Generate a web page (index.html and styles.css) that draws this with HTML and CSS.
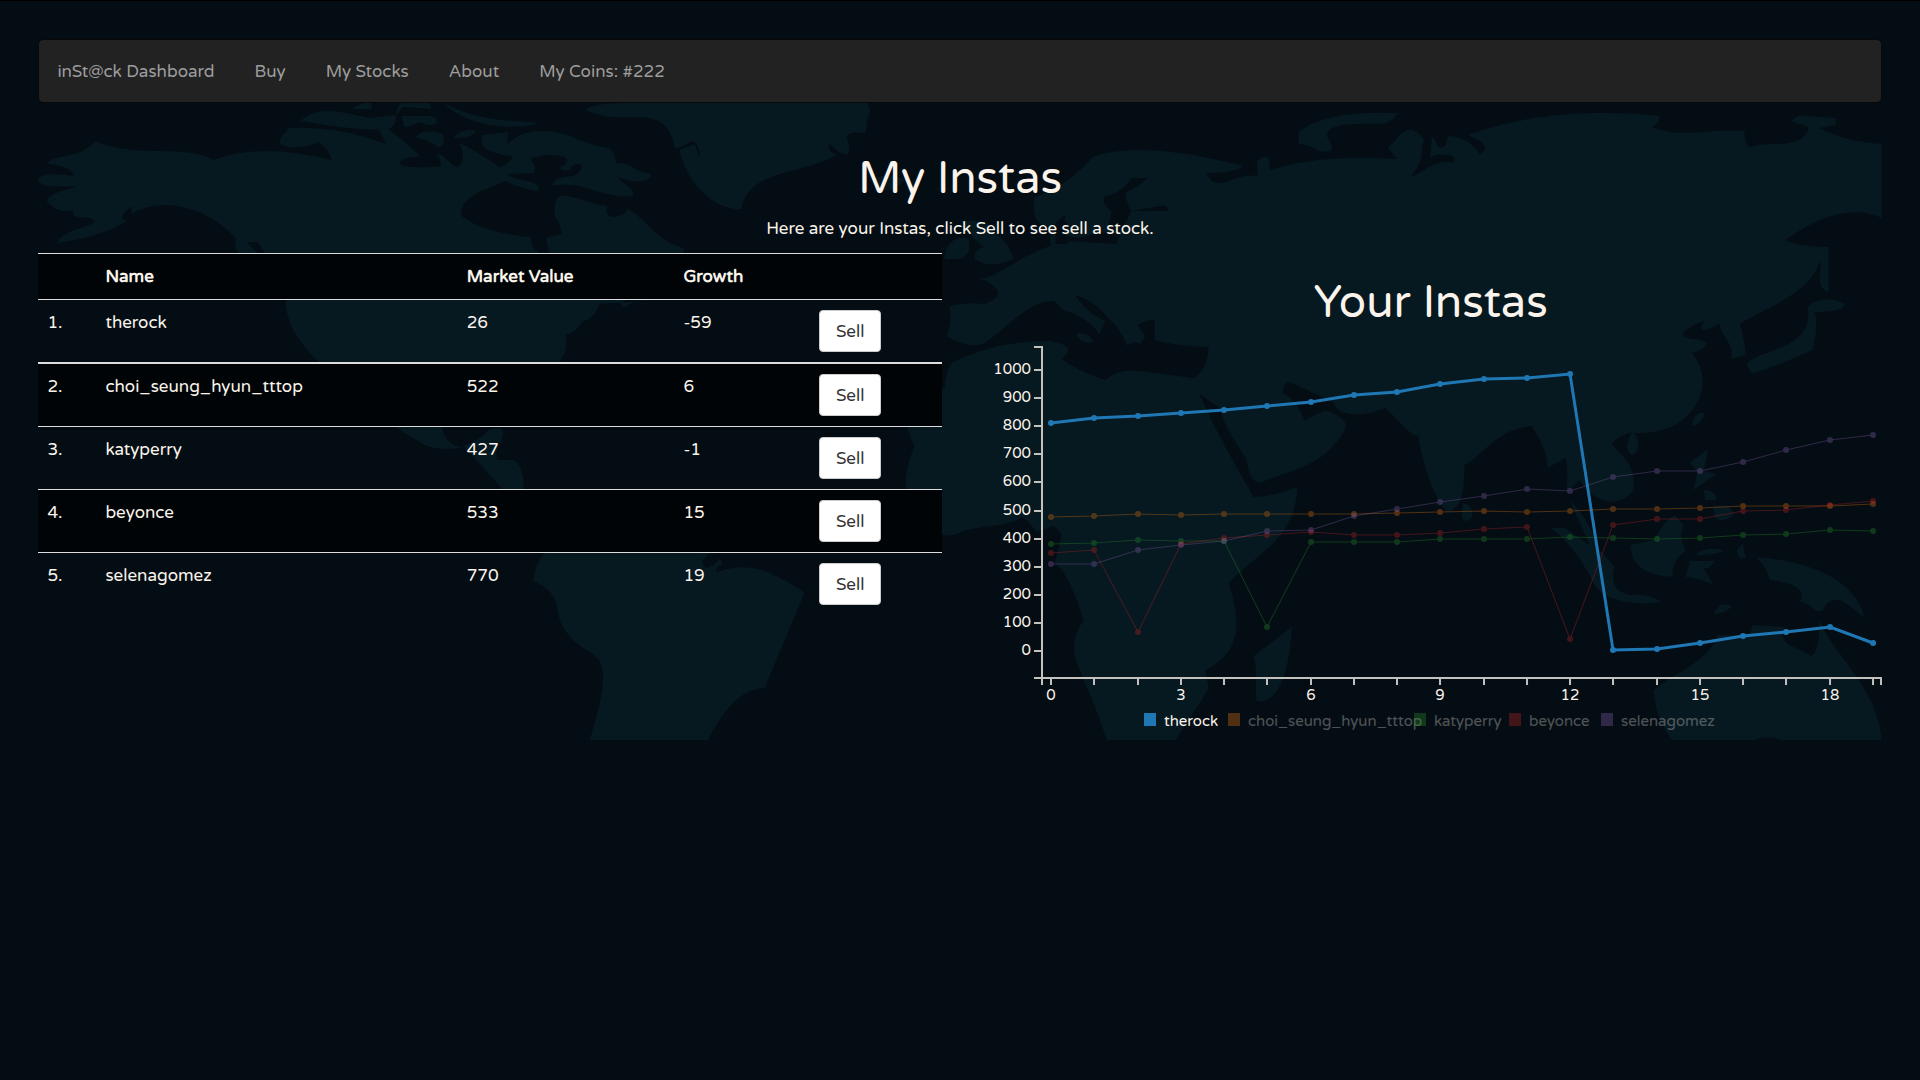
FILE: index.html
```html
<!DOCTYPE html>
<html lang="en">
<head>
<meta charset="utf-8">
<title>inSt@ck Dashboard</title>
<meta name="viewport" content="width=device-width, initial-scale=1">
<link rel="stylesheet" href="styles.css">
</head>
<body>
<div class="container">
  <svg class="map" viewBox="38 39 1844 701" preserveAspectRatio="xMidYMin slice" aria-hidden="true">
    <!-- North America -->
    <path d="M96 141Q115 151 160 151Q200 151 214 160Q260 142 332 160Q330 150 319 142C305 149 282 149 280 142Q281 135 287 132L288 128Q340 126 386 144Q384 138 379 130L390 130Q410 145 421 157C410 156 400 160 400 164C405 169 438 167 441 166Q442 158 436 155C446 152 449 166 457 167C463 165 466 158 460 143C475 150 490 160 500 167C506 166 510 160 514 157C505 155 482 152 482 142V135L508 132V144C520 130 545 127 570 136Q590 145 610 148Q615 153 617 163C632 162 636 173 652 174C650 182 635 185 619 177C621 183 634 187 634 195C625 200 600 192 590 189C575 184 565 184 553 186C555 170 580 184 582 166Q576 160 570 170Q562 172 560 168Q573 160 564 157Q548 152 531 159Q538 168 534 173L508 174C515 182 540 178 540 191Q525 190 505 181C490 190 463 192 461 215C475 227 500 234 531 237Q530 245 540 254H550L546 238L562 234Q560 222 556 218C553 205 556 200 560 196C575 194 590 205 608 206C602 220 620 220 629 209C650 222 655 240 684 248V262L664 281L622 303Q618 302 600 304Q596 318 582 322Q577 333 566 335Q568 350 563 357Q556 370 540 379Q535 410 520 400L470 405Q450 400 444 415Q438 440 460 447Q470 445 485 435Q487 428 500 428Q506 430 502 440Q494 452 498 460H515Q527 470 523 497H510L465 447Q440 452 425 445Q400 430 393 425L320 363Q285 330 286 299L265 254Q262 247 258 242L247 242L259 254H240Q234 250 236 238Q205 205 162 205Q142 207 132 214V206Q124 212 122 218L127 221C110 233 80 240 57 243C66 228 92 228 95 221C90 214 72 222 73 210C62 215 50 205 47 201C50 192 70 190 76 186Q60 187 47 186Q38 184 38 180C42 172 60 174 75 176Q70 165 47 164C55 153 80 160 96 141Z"/>
    <path d="M301 121C320 104 340 112 370 118L396 115Q398 125 388 130Q350 130 301 121ZM352 109L363 103H372V109ZM396 115Q398 105 402 103H430L432 109L404 107ZM402 116H432Q440 119 436 124Q428 127 420 122L405 128ZM416 138C418 130 438 130 444 135V144Q441 148 438 147Q425 138 416 138ZM454 138C460 128 475 129 476 131Q474 138 454 138ZM444 103C480 122 510 120 540 123C510 132 465 125 444 103ZM585 109Q600 103 620 103H868Q873 112 868 118L866 133C858 132 846 132 847 138Q852 146 848 154Q840 155 830 144Q826 150 838 155C800 175 748 170 742 209C715 212 685 180 680 150L695 144L700 157L700 155Q698 141 692 141Q682 148 675 148C672 130 665 118 640 117C610 119 595 115 585 109ZM621 303L650 300Q638 298 624 308Z"/>
    <path d="M526 364L550 366Q565 374 568 386Q550 374 526 364ZM580 380Q600 372 611 382Q598 396 580 380Z"/>
    <!-- South America -->
    <path d="M545 553H710L702 562L706 568Q716 566 720 558L723 564Q715 568 717 572Q745 562 770 573Q790 582 805 593L765 688C735 690 720 720 708 740H590Q606 690 603 670Q601 658 590 652Q560 636 557 605Q554 590 534 581Q535 564 545 553Z"/>
    <!-- Europe and Africa -->
    <path d="M1051 246V227C1030 225 1035 205 1034 198C1060 187 1072 180 1093 157C1130 143 1190 152 1244 166C1230 175 1216 171 1207 174Q1212 184 1220 183C1230 183 1240 173 1258 176Q1258 165 1257 161Q1267 153 1270 160V170C1310 158 1350 156 1396 159L1397 158L1388 148Q1392 145 1396 140Q1410 120 1424 139C1421 155 1424 160 1412 176C1424 173 1435 158 1454 163Q1457 154 1446 155Q1435 153 1430 158Q1432 142 1432 138Q1435 136 1438 146Q1442 150 1446 145Q1448 133 1452 136Q1472 140 1480 154Q1490 150 1482 142L1468 135C1530 112 1600 110 1660 116Q1660 123 1653 127C1680 139 1710 128 1745 131Q1744 142 1750 147C1770 140 1800 151 1809 129C1806 123 1797 125 1792 121Q1797 114 1810 116L1836 118V125L1820 128C1840 139 1860 142 1882 144V218C1855 205 1820 215 1786 240Q1795 246 1829 247V292Q1820 290 1820 278L1821 260C1810 295 1765 308 1740 324C1744 336 1746 348 1746 355L1732 359C1734 340 1722 340 1720 324C1712 327 1706 333 1701 328L1704 321C1690 326 1683 332 1683 335C1690 342 1705 337 1707 344Q1705 350 1692 353C1720 385 1692 435 1638 433Q1626 430 1612 443C1620 456 1636 460 1634 490Q1625 502 1610 502Q1590 498 1580 480L1567 493C1568 470 1568 465 1566 458L1548 468Q1548 450 1532 426C1495 430 1485 455 1465 465C1464 490 1464 508 1448 512C1436 504 1420 455 1419 436C1410 436 1400 420 1385 408C1365 418 1335 416 1334 402Q1330 400 1316 394Q1304 388 1289 382Q1282 384 1284 394Q1295 398 1305 420Q1315 415 1326 410C1345 417 1348 423 1345 430C1325 465 1300 467 1260 483Q1250 482 1247 460C1235 440 1226 430 1220 408L1200 394Q1215 430 1254 497Q1272 497 1298 487C1295 540 1260 550 1229 583C1245 630 1236 655 1206 670L1209 689L1176 740H1107C1095 700 1078 670 1075 655Q1072 635 1084 621C1075 590 1065 570 1055 563L1062 536Q1062 532 1054 526L1037 532Q1030 522 1022 517C1010 528 970 525 955 535C925 540 905 500 906 480Q908 460 915 447L908 430L910 420L920 400L945 388Q946 370 953 362Q1000 340 1050 341Q1075 345 1066 355L1062 359Q1080 372 1106 380Q1118 368 1140 371L1194 378Q1208 370 1209 347Q1180 347 1155 340V320Q1146 320 1138 325L1146 336L1141 344Q1134 340 1128 346Q1118 325 1110 320Q1095 300 1075 295Q1090 315 1106 321L1100 334Q1085 315 1065 311L1054 301C1030 300 1005 330 985 343Q970 350 947 336Q953 320 950 306Q970 302 985 304Q1005 296 995 287Q988 280 979 279C1000 277 1020 255 1051 246Z"/>
    <path d="M1299 132Q1325 110 1398 113Q1392 124 1380 124C1345 123 1325 125 1328 138Q1340 155 1320 151Q1310 145 1299 144ZM1077 333Q1090 332 1094 342L1089 343Q1078 342 1077 333ZM945 259C943 245 960 232 969 240C973 250 965 260 957 259ZM975 259Q974 250 984 247Q970 236 962 222Q975 218 988 224Q990 232 998 235Q1010 245 1014 259Q990 270 975 259ZM875 178Q890 172 905 180Q895 192 880 190ZM1292 627C1290 680 1275 705 1257 701C1255 680 1258 670 1254 656ZM1463 503Q1475 505 1472 518Q1465 525 1462 516Z"/>
    <!-- Baltic Sea -->
    <path class="sea" d="M1065 222V215L1056 223V244H1066L1070 241L1116 244L1121 234L1100 232L1080 238L1066 236L1068 222ZM1148 178Q1140 186 1126 193Q1126 202 1132 211H1168Q1170 205 1160 206L1132 211L1120 233L1108 228L1112 212Q1103 205 1104 197Q1124 192 1132 178Z"/>
    <!-- East Asia and Oceania -->
    <path d="M1808 308C1815 297 1835 298 1845 304Q1844 312 1814 312Q1820 322 1813 350Q1780 365 1752 374L1747 364C1760 348 1815 350 1808 308ZM1692 426Q1695 410 1705 413Q1703 424 1692 426ZM1633 430Q1645 448 1633 455Q1622 452 1633 430ZM1690 463L1708 449Q1708 460 1702 476ZM1698 470L1717 474L1694 490ZM1704 490Q1717 490 1717 500L1706 500ZM1570 500Q1587 515 1600 550L1615 567Q1608 590 1630 595Q1650 593 1662 602C1630 606 1605 600 1595 585Q1575 545 1551 528L1565 528L1590 545ZM1631 545L1654 540Q1665 520 1675 515L1684 525L1681 535L1686 551Q1672 560 1673 577Q1635 575 1631 550ZM1696 555Q1705 546 1724 550Q1720 555 1696 555ZM1690 561H1715Q1710 570 1704 568L1714 585Q1700 578 1686 577ZM1743 543L1746 557Q1740 562 1737 551ZM1714 506Q1735 503 1733 516Q1720 525 1714 515ZM1756 557C1800 560 1855 575 1865 618Q1850 605 1840 600Q1828 598 1823 611H1816Q1808 602 1800 602Q1810 585 1770 580Q1768 568 1756 557ZM1714 614Q1720 600 1733 606Q1727 613 1714 614ZM1654 690C1680 670 1710 660 1718 635H1750L1753 625L1785 627Q1780 640 1790 645L1812 656Q1820 650 1820 620C1830 650 1880 690 1882 740H1780Q1770 735 1755 740H1672Q1655 715 1654 690Z"/>
  </svg>

  <nav class="navbar">
    <a class="brand" href="#">inSt@ck Dashboard</a>
    <a href="#">Buy</a>
    <a href="#">My Stocks</a>
    <a href="#">About</a>
    <a href="#">My Coins: #222</a>
  </nav>

  <header class="intro">
    <h1>My Instas</h1>
    <p>Here are your Instas, click Sell to see sell a stock.</p>
  </header>

  <main class="columns">
    <table class="stocks">
      <colgroup><col class="c-num"><col class="c-name"><col class="c-value"><col class="c-growth"><col class="c-action"></colgroup>
      <thead>
        <tr><th></th><th>Name</th><th>Market Value</th><th>Growth</th><th></th></tr>
      </thead>
      <tbody>
        <tr><td>1.</td><td>therock</td><td>26</td><td>-59</td><td><button type="button">Sell</button></td></tr>
        <tr><td>2.</td><td>choi_seung_hyun_tttop</td><td>522</td><td>6</td><td><button type="button">Sell</button></td></tr>
        <tr><td>3.</td><td>katyperry</td><td>427</td><td>-1</td><td><button type="button">Sell</button></td></tr>
        <tr><td>4.</td><td>beyonce</td><td>533</td><td>15</td><td><button type="button">Sell</button></td></tr>
        <tr><td>5.</td><td>selenagomez</td><td>770</td><td>19</td><td><button type="button">Sell</button></td></tr>
      </tbody>
    </table>

    <section class="chart-panel">
      <h1>Your Instas</h1>
      <svg class="chart" id="chart" viewBox="980 340 902 392" role="img" aria-label="Value history of your Instas"></svg>
    </section>
  </main>
</div>
<script src="chart.js"></script>
</body>
</html>
```
FILE: styles.css
```css
* {
  box-sizing: border-box;
}

body {
  margin: 0;
  padding: 38px 2%;
  border-top: 1px solid #000;
  background: #040d14;
  color: #fbf4ec;
  font-family: "Varela Round", "Open Sans", sans-serif;
  font-size: 17px;
  line-height: 25px;
}

.container {
  position: relative;
  overflow: hidden;
  padding-bottom: 8px;
}

.map {
  position: absolute;
  z-index: -1;
  top: 0;
  left: 0;
  width: 100%;
  height: 100%;
  fill: #061820;
}

.sea {
  fill: #040d14;
}

.navbar {
  display: flex;
  align-items: center;
  gap: 40px;
  height: 64px;
  padding: 0 18px;
  border: 1px solid #080808;
  border-radius: 5px;
  background: #222;
}

.navbar a {
  color: #9d9d9d;
  text-decoration: none;
}

h1 {
  margin: 0;
  font-size: 45px;
  font-weight: 400;
  line-height: 50px;
  text-align: center;
}

.intro {
  padding-top: 51px;
  text-align: center;
}

.intro p {
  margin: 12px 0;
}

.columns {
  display: grid;
  grid-template-columns: 49fr 51fr;
  align-items: start;
}

.stocks {
  width: 100%;
  border-collapse: collapse;
  table-layout: fixed;
}

.c-num { width: 58px; }
.c-name { width: 40%; }
.c-value { width: 24%; }
.c-growth { width: 15%; }

.stocks th,
.stocks td {
  padding: 10px 9px;
  border-top: 1px solid #ddd;
  text-align: left;
  vertical-align: top;
}

.stocks th {
  height: 46px;
  font-weight: 700;
}

.stocks tbody tr:nth-child(2) td {
  border-top-width: 2px;
}

.stocks thead tr,
.stocks tbody tr:nth-child(even) {
  background: #000407;
}

.stocks button {
  display: block;
  height: 42px;
  padding: 0 16px;
  border: 1px solid #ccc;
  border-radius: 4px;
  background: #fff;
  color: #333;
  font: inherit;
}

.chart-panel {
  padding: 25px 0 0 38px;
}

.chart {
  display: block;
  width: 100%;
  margin-top: 12px;
}

.chart text {
  fill: #fbf4ec;
  font-size: 15px;
}

.axis {
  fill: none;
  stroke: #c4c2be;
  stroke-width: 2;
}

.y-label {
  text-anchor: end;
}

.x-label {
  text-anchor: middle;
}

.series path {
  fill: none;
  stroke-width: 1;
}

.series.focused path {
  stroke-width: 3;
}

.dimmed {
  opacity: 0.3;
}
```
FILE: chart.js
```js
const names = ["therock", "choi_seung_hyun_tttop", "katyperry", "beyonce", "selenagomez"];
const colors = ["#1f77b4", "#ff7f0e", "#2ca02c", "#d62728", "#9467bd"];
const legendX = [1144, 1228, 1414, 1509, 1601];
const values = [
  [811, 829, 837, 848, 859, 873, 885, 910, 921, 949, 968, 970, 985, 3, 7, 29, 53, 68, 87, 27],
  [477, 480, 486, 485, 488, 488, 487, 488, 492, 493, 497, 496, 499, 505, 506, 510, 515, 517, 517, 522],
  [380, 383, 394, 391, 391, 86, 389, 387, 389, 397, 397, 397, 406, 402, 400, 401, 412, 416, 429, 428],
  [349, 361, 66, 381, 401, 413, 423, 414, 414, 420, 434, 441, 43, 448, 471, 471, 498, 503, 519, 533],
  [310, 310, 360, 376, 391, 427, 432, 479, 507, 529, 551, 578, 571, 618, 639, 640, 671, 717, 751, 770]
];
const x = i => Math.round(1051 + i * 43.26);
const y = v => Math.round(651 - v * 0.281);
let out = "";

values.forEach((list, s) => {
  const line = list.map((v, i) => `${i ? "L" : "M"}${x(i)} ${y(v)}`).join("");
  const dots = list.map((v, i) => `<circle cx="${x(i)}" cy="${y(v)}" r="3"/>`).join("");
  out += `<g class="series ${s ? "dimmed" : "focused"}" fill="${colors[s]}" stroke="none"><path d="${line}" stroke="${colors[s]}"/>${dots}</g>`;
});

let ticks = "M1034 347H1042V678M1034 678H1881V685M1042 678V685";
for (let v = 0; v <= 1000; v += 100) {
  ticks += `M1034 ${y(v)}H1042`;
  out += `<text class="y-label" x="1031" y="${y(v) + 4}">${v}</text>`;
}
for (let i = 0; i < 20; i++) {
  ticks += `M${x(i)} 678V685`;
  if (i % 3 === 0) out += `<text class="x-label" x="${x(i)}" y="700">${i}</text>`;
}
out += `<path class="axis" d="${ticks}"/>`;

names.forEach((name, s) => {
  out += `<g class="${s ? "dimmed" : ""}"><rect x="${legendX[s]}" y="713" width="12" height="13" fill="${colors[s]}"/><text x="${legendX[s] + 20}" y="726">${name}</text></g>`;
});
document.getElementById("chart").innerHTML = out;
```
